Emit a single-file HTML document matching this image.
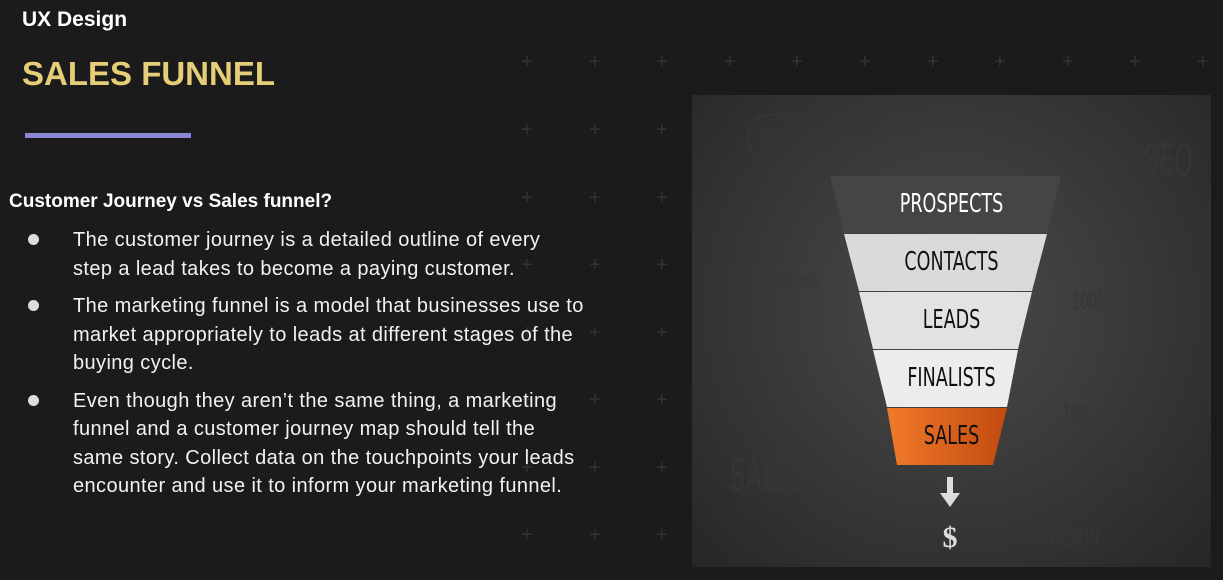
<!DOCTYPE html>
<html><head><meta charset="utf-8"><style>
body{margin:0;width:1223px;height:580px;overflow:hidden;background:#1b1b1b;font-family:"Liberation Sans",sans-serif;position:relative}
.plus{position:absolute;color:#333;font-size:20px;line-height:20px}
.t{position:absolute;white-space:nowrap}
ul{position:absolute;left:30px;top:226px;margin:0;padding:0;list-style:none;color:#f2f2f2;font-size:20px;letter-spacing:0.4px;line-height:28.5px;width:600px;white-space:nowrap}
li{position:relative;padding-left:43px;margin-bottom:9px}
li:before{content:"";position:absolute;left:-2px;top:8px;width:11px;height:11px;border-radius:50%;background:#ddd}
.band{position:absolute;left:0;width:100%;text-align:center;font-family:"DejaVu Sans Condensed","Liberation Sans Narrow",sans-serif;font-size:26px;transform:scaleX(.75)}
.bg{position:absolute;color:#363636;font-family:"DejaVu Sans Condensed",sans-serif;transform:scaleX(.6);transform-origin:0 0;white-space:nowrap}
</style></head><body>
<div class="t" style="left:22px;top:8px;color:#fff;font-weight:bold;font-size:21px">UX Design</div>
<div class="t" style="left:22px;top:55px;color:#e6cd78;font-weight:bold;font-size:33px">SALES FUNNEL</div>
<div style="position:absolute;left:25px;top:133px;width:166px;height:5px;background:#8a86d4"></div>
<div id="pl"></div>
<div class="t" style="left:9px;top:191px;color:#fff;font-weight:bold;font-size:19px">Customer Journey vs Sales funnel?</div>
<ul>
<li>The customer journey is a detailed outline of every<br>step a lead takes to become a paying customer.</li>
<li>The marketing funnel is a model that businesses use to<br>market appropriately to leads at different stages of the<br>buying cycle.</li>
<li>Even though they aren’t the same thing, a marketing<br>funnel and a customer journey map should tell the<br>same story. Collect data on the touchpoints your leads<br>encounter and use it to inform your marketing funnel.</li>
</ul>
<div style="position:absolute;left:692px;top:95px;width:519px;height:472px;background:radial-gradient(ellipse at 50% 45%,#4a4a4a,#303030 75%,#262626);overflow:hidden">
<div class="bg" style="left:68px;top:30px;font-size:24px">SEO</div>
<div style="position:absolute;left:55px;top:18px;width:48px;height:48px;border:2px solid #363636;border-radius:50%"></div>
<div class="bg" style="left:158px;top:22px;font-size:20px">TARGET</div>
<div class="bg" style="left:452px;top:40px;font-size:44px">SEO</div>
<div class="bg" style="left:77px;top:178px;font-size:15px">MARKETING</div>
<div class="bg" style="left:380px;top:192px;font-size:24px">100%</div>
<div class="bg" style="left:370px;top:305px;font-size:24px">10%</div>
<div class="bg" style="left:38px;top:355px;font-size:44px">SALES</div>
<div class="bg" style="left:425px;top:358px;font-size:16px">WWW.</div>
<div class="bg" style="left:320px;top:428px;font-size:24px">CONVERSION</div>
<svg style="position:absolute;left:0;top:0" width="519" height="472">
<defs><linearGradient id="o" x1="0" x2="1"><stop offset="0" stop-color="#f07a2a"/><stop offset="1" stop-color="#c24a10"/></linearGradient></defs>
<polygon points="138,81 369,81 355,138 152,138" fill="#454545"/>
<polygon points="152,139 355,139 340,196 167,196" fill="#dadada"/>
<polygon points="167,197 340,197 326,254 181,254" fill="#e2e2e2"/>
<polygon points="181,255 326,255 315,312 195,312" fill="#ececec"/>
<polygon points="195,313 315,313 301,370 205,370" fill="url(#o)"/>
<rect x="255" y="382" width="6" height="18" fill="#ddd"/><polygon points="248,398 268,398 258,412" fill="#ddd"/>
<text x="258" y="452" text-anchor="middle" font-size="30" font-weight="bold" fill="#ddd" font-family="Liberation Serif">$</text>
</svg>
<div class="band" style="top:94px;color:#fff">PROSPECTS</div>
<div class="band" style="top:152px;color:#111">CONTACTS</div>
<div class="band" style="top:210px;color:#111">LEADS</div>
<div class="band" style="top:268px;color:#111">FINALISTS</div>
<div class="band" style="top:326px;color:#111">SALES</div>
</div>
<script>
var s="";[527,595,662,730,797,865,933,1000,1068,1135,1203].forEach(function(x){[62,130].forEach(function(y){s+='<div class="plus" style="left:'+(x-6)+'px;top:'+(y-10)+'px">+</div>'})});
[198,265,333,400,468,535].forEach(function(y){[527,595,662].forEach(function(x){s+='<div class="plus" style="left:'+(x-6)+'px;top:'+(y-10)+'px">+</div>'})});
document.getElementById("pl").innerHTML=s;
</script>
</body></html>
